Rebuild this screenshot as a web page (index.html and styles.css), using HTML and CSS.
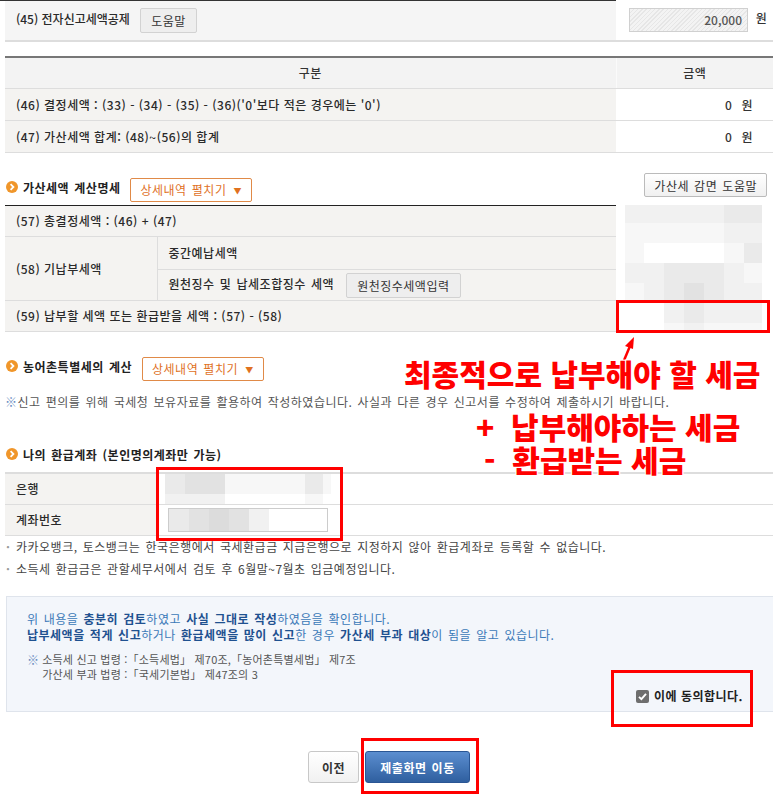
FILE: index.html
```html
<!DOCTYPE html>
<html lang="ko">
<head>
    <meta charset="UTF-8">
    <title>세액 계산 확인</title>
    <link rel="stylesheet" href="styles.css">
</head>
<body>
<div class="page">

    <table class="form-table t45">
        <colgroup><col class="c-left"><col class="c-right"></colgroup>
        <tr>
            <td class="label">(45) 전자신고세액공제 <button class="btn-gray">도움말</button></td>
            <td class="amt-input"><span class="ro-input">20,000</span> 원</td>
        </tr>
    </table>

    <table class="form-table t-sum">
        <colgroup><col class="c-left"><col class="c-right"></colgroup>
        <tr>
            <th>구분</th>
            <th class="th-amt">금액</th>
        </tr>
        <tr>
            <td class="label">(46) 결정세액 : (33) - (34) - (35) - (36)('0'보다 적은 경우에는 '0')</td>
            <td class="amt">0 <span class="won">원</span></td>
        </tr>
        <tr>
            <td class="label">(47) 가산세액 합계: (48)~(56)의 합계</td>
            <td class="amt">0 <span class="won">원</span></td>
        </tr>
    </table>

    <div class="sec-head">
        <span class="dot"><svg width="12" height="12" viewBox="0 0 12 12"><circle cx="6" cy="6" r="6" fill="#f0962a"/><path d="M4.6 3.2 L7.4 6 L4.6 8.8" fill="none" stroke="#fff" stroke-width="1.8"/></svg></span>
        <h3>가산세액 계산명세</h3>
        <button class="btn-orange">상세내역 펼치기 <span class="tri">▼</span></button>
        <button class="btn-light">가산세 감면 도움말</button>
    </div>

    <table class="form-table t-add">
        <colgroup><col class="c-a1"><col class="c-a2"><col class="c-right"></colgroup>
        <tr>
            <td class="label" colspan="2">(57) 총결정세액 : (46) + (47)</td>
            <td class="blur-cell" rowspan="4">
                <div class="pix">
                    <i class="b2"></i><i class="b2"></i><i class="b2"></i><i class="b2"></i><i class="b2"></i><i class="b3"></i><i class="b3"></i>
                    <i class="b1"></i><i class="b1"></i><i class="b1"></i><i class="b1"></i><i class="b1"></i><i class="b2"></i><i class="b2"></i>
                    <i class="b1"></i><i class="b0"></i><i class="b0"></i><i class="b0"></i><i class="b0"></i><i class="b1"></i><i class="b3"></i>
                    <i class="b2"></i><i class="b2"></i><i class="b3"></i><i class="b3"></i><i class="b3"></i><i class="b2"></i><i class="b1"></i>
                    <i class="b1"></i><i class="b2"></i><i class="b3"></i><i class="b4"></i><i class="b3"></i><i class="b2"></i><i class="b2"></i>
                    <i class="b0"></i><i class="b0"></i><i class="b2"></i><i class="b3"></i><i class="b2"></i><i class="b2"></i><i class="b2"></i>
                    <i class="b0"></i><i class="b0"></i><i class="b1"></i><i class="b2"></i><i class="b1"></i><i class="b1"></i><i class="b1"></i>
                </div>
            </td>
        </tr>
        <tr>
            <td class="label" rowspan="2">(58) 기납부세액</td>
            <td class="label sub">중간예납세액</td>
        </tr>
        <tr>
            <td class="label sub">원천징수 및 납세조합징수 세액 <button class="btn-gray">원천징수세액입력</button></td>
        </tr>
        <tr>
            <td class="label" colspan="2">(59) 납부할 세액 또는 환급받을 세액 : (57) - (58)</td>
        </tr>
    </table>

    <div class="sec-head sec-farm">
        <span class="dot"><svg width="12" height="12" viewBox="0 0 12 12"><circle cx="6" cy="6" r="6" fill="#f0962a"/><path d="M4.6 3.2 L7.4 6 L4.6 8.8" fill="none" stroke="#fff" stroke-width="1.8"/></svg></span>
        <h3>농어촌특별세의 계산</h3>
        <button class="btn-orange">상세내역 펼치기 <span class="tri">▼</span></button>
    </div>

    <p class="note"><span class="kome">※</span>신고 편의를 위해 국세청 보유자료를 활용하여 작성하였습니다. 사실과 다른 경우 신고서를 수정하여 제출하시기 바랍니다.</p>

    <div class="sec-head sec-bank">
        <span class="dot"><svg width="12" height="12" viewBox="0 0 12 12"><circle cx="6" cy="6" r="6" fill="#f0962a"/><path d="M4.6 3.2 L7.4 6 L4.6 8.8" fill="none" stroke="#fff" stroke-width="1.8"/></svg></span>
        <h3>나의 환급계좌 (본인명의계좌만 가능)</h3>
    </div>

    <table class="form-table t-bank">
        <colgroup><col class="c-a1"><col></colgroup>
        <tr>
            <td class="label">은행</td>
            <td class="val">
                <div class="bank-blur">
                    <i class="b3"></i><i class="b4"></i><i class="b4"></i><i class="b1"></i><i class="b3"></i><i class="b1"></i>
                    <i class="b2"></i><i class="b2"></i><i class="b2"></i><i class="b0"></i><i class="b1"></i><i class="b0"></i>
                </div>
            </td>
        </tr>
        <tr>
            <td class="label">계좌번호</td>
            <td class="val">
                <div class="acct-input">
                    <i class="b3"></i><i class="b4"></i><i class="b5"></i><i class="b4"></i><i class="b2"></i>
                </div>
            </td>
        </tr>
    </table>

    <ul class="bullets">
        <li>카카오뱅크, 토스뱅크는 한국은행에서 국세환급금 지급은행으로 지정하지 않아 환급계좌로 등록할 수 없습니다.</li>
        <li>소득세 환급금은 관할세무서에서 검토 후 6월말~7월초 입금예정입니다.</li>
    </ul>

    <div class="confirm-box">
        <p class="confirm-text">위 내용을 <b>충분히 검토</b>하였고 <b>사실 그대로 작성</b>하였음을 확인합니다.<br>
        <b>납부세액을 적게 신고</b>하거나 <b>환급세액을 많이 신고</b>한 경우 <b>가산세 부과 대상</b>이 됨을 알고 있습니다.</p>
        <div class="law">
            <span class="kome">※</span>
            <div>소득세 신고 법령 :「소득세법」 제70조,「농어촌특별세법」 제7조<br>가산세 부과 법령 :「국세기본법」 제47조의 3</div>
        </div>
        <label class="agree">
            <span class="chk"><svg width="13" height="13" viewBox="0 0 13 13"><path d="M3 6.8 L5.4 9.2 L10 3.8" fill="none" stroke="#fff" stroke-width="1.9"/></svg></span>
            이에 동의합니다.
        </label>
    </div>

    <div class="bottom-btns">
        <button class="btn-prev">이전</button>
        <button class="btn-submit">제출화면 이동</button>
    </div>

    <!-- 주석 표시 (빨간 박스, 화살표, 설명) -->
    <div class="mark mark-59"></div>
    <div class="mark mark-bank"></div>
    <div class="mark mark-agree"></div>
    <div class="mark mark-btn"></div>

    <svg class="arrow" width="30" height="40" viewBox="0 0 30 40">
        <line x1="6" y1="34" x2="16" y2="10" stroke="#f00" stroke-width="2.5"/>
        <path d="M20 1 L11 10 L19 13 Z" fill="#f00"/>
    </svg>

    <div class="memo memo-1">최종적으로 납부해야 할 세금</div>
    <div class="memo memo-2">+&nbsp; 납부해야하는 세금</div>
    <div class="memo memo-3">-&nbsp; 환급받는 세금</div>
</div>
</body>
</html>
```

FILE: styles.css
```css
body {
    margin: 0;
    width: 773px;
    overflow: hidden;
    font-family: "Noto Sans CJK KR", "Malgun Gothic", sans-serif;
    font-size: 12px;
    letter-spacing: 0.5px;
    word-spacing: 1.3px;
    color: #333;
    background: #fff;
}
.page {
    position: relative;
    width: 768px;
    padding-left: 5px;
    height: 798px;
}
.page::before {
    content: "";
    position: absolute;
    left: 0;
    top: 0;
    width: 616px;
    border-top: 1px solid #333;
}
button {
    font-family: inherit;
    font-size: 12px;
    letter-spacing: inherit;
    word-spacing: inherit;
    cursor: pointer;
}

/* 공통 테이블 */
.form-table {
    width: 100%;
    border-collapse: collapse;
    table-layout: fixed;
}
.form-table td,
.form-table th {
    height: 31px;
    padding: 0 11px;
    border-bottom: 1px solid #ddd;
    line-height: 16px;
    font-weight: 500;
}
.form-table .label {
    background: #f4f3f1;
    color: #2a2a2a;
}
.c-left { width: 611px; }
.c-right { width: 157px; }
.c-a1 { width: 152px; }
.c-a2 { width: 459px; }

.btn-gray {
    height: 25px;
    padding: 0 10px;
    margin-left: 7px;
    background: #eee;
    border: 1px solid #d2d2d2;
    border-radius: 2px;
    color: #333;
    vertical-align: middle;
    letter-spacing: 0.5px;
}

/* (45) */
.t45 td {
    height: 39px;
    border-bottom: 2px solid #ddd;
}
.t45 .label {
    background: #f5f5f5;
    border-top: 1px solid #333;
    letter-spacing: 0;
    word-spacing: 0;
}
.amt-input {
    padding: 0 0 0 13px !important;
    white-space: nowrap;
    letter-spacing: 0;
}
.ro-input {
    display: inline-block;
    width: 112px;
    height: 22px;
    line-height: 22px;
    padding-right: 5px;
    text-align: right;
    color: #555;
    border: 1px solid #d0d0d0;
    background: repeating-linear-gradient(-45deg, #f3f3f3 0, #f3f3f3 2px, #e6e6e6 2px, #e6e6e6 3px);
    vertical-align: middle;
    margin-right: 3px;
}

/* (46)(47) */
.t-sum {
    margin-top: 14px;
    border-top: 2px solid #777;
}
.t-sum th {
    background: #f3f3f3;
    height: 30px;
    color: #333;
}
.t-sum .label { word-spacing: 0; }
.t-sum .th-amt { border-left: 1px solid #fafafa; }
.t-sum .amt {
    text-align: right;
    padding-right: 20px;
    color: #333;
}
.won { margin-left: 4px; }

/* 섹션 제목 */
.sec-head {
    display: flex;
    align-items: center;
    height: 30px;
    margin-top: 19px;
    padding-bottom: 3px;
}
.sec-head .dot {
    display: flex;
    margin: 0 5px 0 1px;
}
.sec-head h3 {
    margin: 0;
    font-size: 12px;
    font-weight: bold;
    color: #222;
}
.btn-orange {
    height: 24px;
    margin: 5px 0 0 10px;
    padding: 0 9px;
    background: #fff;
    border: 1px solid #e08a48;
    border-radius: 2px;
    color: #e0711f;
}
.btn-orange .tri {
    font-size: 8px;
    margin-left: 2px;
    vertical-align: 1px;
}
.btn-light {
    align-self: flex-start;
    margin-left: auto;
    margin-right: 6px;
    margin-top: 1px;
    height: 24px;
    padding: 0 9px;
    background: linear-gradient(#fff, #f0f0f0);
    border: 1px solid #bbb;
    border-radius: 2px;
    color: #333;
}

/* (57)~(59) */
.t-add td { height: 30px; }
.t-add .label { word-spacing: 0; }
.t-add .sub { word-spacing: 1.3px; }
.t-add tr:first-child .label { border-top: 1px solid #222; }
.t-add .sub { border-left: 1px solid #ddd; }
.blur-cell {
    background: #fff;
    border-bottom: 0 !important;
    padding: 0 0 0 9px !important;
    vertical-align: top;
}
.pix {
    display: grid;
    grid-template-columns: 19px repeat(5, 20px) 18px;
    grid-template-rows: 18px repeat(5, 20px) 9px;
    margin-top: -1px;
}
.b0 { background: #fff; }
.b1 { background: #f7f7f7; }
.b2 { background: #f1f1f1; }
.b3 { background: #eaeaea; }
.b4 { background: #e2e2e2; }
.b5 { background: #dcdcdc; }

.sec-farm { margin-top: 19px; }
.note {
    margin: 9px 0 0;
    line-height: 18px;
    color: #555;
    font-size: 12px;
}
.kome { color: #6a8cc0; }
.sec-bank { margin-top: 28px; }

/* 환급계좌 */
.t-bank { border-top: 2px solid #ddd; }
.t-bank td { height: 30px; }
.t-bank .val { padding: 0 0 0 8px; }
.bank-blur {
    display: grid;
    grid-template-columns: 20px 20px 20px 80px 18px 8px;
    grid-template-rows: 20px 10px;
}
.acct-input {
    display: flex;
    width: 158px;
    height: 22px;
    margin-left: 3px;
    border: 1px solid #ccc;
    background: #fff;
}
.acct-input i { width: 20px; }

.bullets {
    list-style: none;
    margin: 0;
    padding: 0;
}
.bullets li {
    line-height: 22px;
    color: #444;
    padding-left: 11px;
    position: relative;
}
.bullets li::before {
    content: "·";
    position: absolute;
    left: 1px;
    color: #999;
    font-weight: bold;
}

/* 확인 박스 */
.confirm-box {
    margin: 16px 0 0 1px;
    padding: 14px 30px 7px 20px;
    background: #f3f6fb;
    border: 1px solid #dfe4ec;
    border-right: 0;
}
.confirm-text {
    margin: 0;
    line-height: 16px;
    color: #3b79b8;
}
.confirm-text b { color: #1f5190; }
.law {
    display: flex;
    margin-top: 9px;
    line-height: 15px;
    font-size: 11px;
    letter-spacing: 0.2px;
    word-spacing: 0;
    color: #555;
}
.law .kome {
    font-size: 12px;
    margin-right: 3px;
}
.agree {
    display: flex;
    justify-content: flex-end;
    align-items: center;
    gap: 5px;
    margin-top: 6px;
    line-height: 16px;
    font-weight: bold;
    color: #222;
    word-spacing: 0;
    letter-spacing: 0.5px;
}
.chk {
    display: flex;
    width: 13px;
    height: 13px;
    background: #6e6e6e;
    border-radius: 2px;
}

/* 하단 버튼 */
.bottom-btns {
    display: flex;
    justify-content: center;
    gap: 6px;
    margin-top: 39px;
}
.btn-prev {
    width: 51px;
    height: 32px;
    background: linear-gradient(#fff, #f1f1f1);
    border: 1px solid #c8c8c8;
    border-radius: 3px;
    font-weight: bold;
    color: #333;
}
.btn-submit {
    width: 105px;
    height: 32px;
    background: linear-gradient(#5b8ed0, #2f5f9f);
    border: 1px solid #2a5694;
    border-radius: 3px;
    font-weight: bold;
    color: #fff;
}

/* 빨간 주석 */
.mark {
    position: absolute;
    border: 3px solid #f00;
    box-sizing: border-box;
}
.mark-59 { left: 616px; top: 300px; width: 154px; height: 33px; }
.mark-bank { left: 156px; top: 467px; width: 187px; height: 74px; }
.mark-agree { left: 611px; top: 670px; width: 142px; height: 57px; }
.mark-btn { left: 361px; top: 738px; width: 118px; height: 56px; }
.arrow {
    position: absolute;
    left: 614px;
    top: 336px;
}
.memo {
    position: absolute;
    font-size: 30px;
    font-weight: 900;
    color: #f00;
    white-space: nowrap;
    letter-spacing: 0;
    word-spacing: 0;
    text-shadow: 1px 1px 0 #fff, -1px -1px 0 #fff, 1px -1px 0 #fff, -1px 1px 0 #fff;
    line-height: 26px;
}
.memo-1 { left: 404px; top: 360px; }
.memo-2 { left: 476px; top: 413px; }
.memo-3 { left: 484px; top: 446px; }
```
